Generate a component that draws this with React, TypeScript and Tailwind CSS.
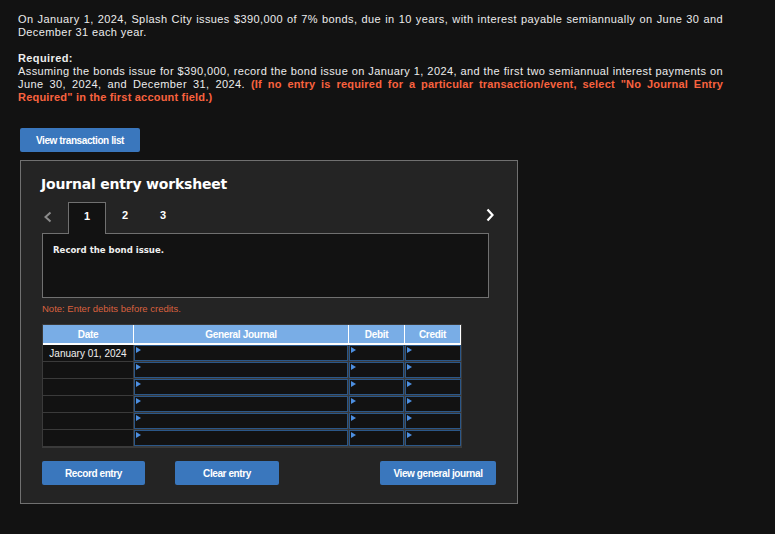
import React from "react";

const rows = [0, 1, 2, 3, 4, 5];

function Tri() {
  return (
    <span className="absolute left-[1px] top-[1px] h-0 w-0 border-y-[3px] border-l-[5px] border-y-transparent border-l-[#4d8fe0]" />
  );
}

function InputCell({ last }: { last?: boolean }) {
  return (
    <div className={`h-[17px] border-b border-[#3a3a3a] ${last ? "" : "border-r"} bg-[#3a3a3a]`}>
      <div className="relative h-full border border-[#2b5788] bg-[#121212]">
        <Tri />
      </div>
    </div>
  );
}

export default function App() {
  const btn =
    "flex h-[24px] items-center justify-center rounded-[2px] bg-[#3a77bd] text-[10px] font-bold tracking-[-0.4px] text-white";
  return (
    <div
      className="min-h-screen w-full bg-[#121212] text-[#ececec]"
      style={{ fontFamily: '"Liberation Sans", Arial, sans-serif' }}
    >
      <div className="pl-[18px] pt-[13px]">
        <p className="w-[705px] text-justify text-[11px] leading-[13px] tracking-[0.4px]">
          On January 1, 2024, Splash City issues $390,000 of 7% bonds, due in 10 years, with interest payable semiannually on June 30 and December 31 each year.
        </p>
        <p className="mt-[13px] w-[705px] text-justify text-[11px] leading-[13px] tracking-[0.4px]">
          <span className="font-bold">Required:</span>
          <br />
          Assuming the bonds issue for $390,000, record the bond issue on January 1, 2024, and the first two semiannual interest payments on June 30, 2024, and December 31, 2024.{" "}
          <span className="font-bold tracking-[0.2px] text-[#f9623f]">
            (If no entry is required for a particular transaction/event, select "No Journal Entry Required" in the first account field.)
          </span>
        </p>

        <button className={`${btn} ml-[2px] mt-[24px] w-[120px]`}>View transaction list</button>

        <div className="ml-[2px] mt-[8px] h-[344px] w-[498px] border border-[#707070] bg-[#242424] pl-[21px] pt-[15px]">
          <div
            className="ml-[-1px] h-[17px] text-[14px] font-bold leading-[17px] tracking-[-0.2px] text-white"
            style={{ fontFamily: '"DejaVu Sans", Verdana, sans-serif' }}
          >
            Journal entry worksheet
          </div>

          <div className="mt-[9px] flex h-[31px] w-[455px] items-start">
            <div className="flex h-[31px] w-[26px] items-center pb-[2px] pl-[1px]">
              <svg width="10" height="12" viewBox="0 0 10 12">
                <path d="M7.5 1.5 L2.5 6 L7.5 10.5" stroke="#8a8a8a" strokeWidth="2" fill="none" />
              </svg>
            </div>
            <div className="relative z-10 flex h-[32px] w-[38px] items-center justify-center border-x border-t border-[#707070] bg-[#121212] pb-[5px] text-[11px] font-bold text-white">
              1
            </div>
            <div className="flex h-[31px] w-[38px] items-center justify-center pb-[4px] text-[11px] font-bold text-white">
              2
            </div>
            <div className="flex h-[31px] w-[38px] items-center justify-center pb-[4px] text-[11px] font-bold text-white">
              3
            </div>
            <div className="flex-1" />
            <div className="flex h-[31px] items-center pb-[5px] pr-[2px]">
              <svg width="10" height="14" viewBox="0 0 10 14">
                <path d="M2.5 1.5 L7.5 7 L2.5 12.5" stroke="#ffffff" strokeWidth="2.2" fill="none" />
              </svg>
            </div>
          </div>

          <div className="h-[65px] w-[447px] border border-[#707070] bg-[#121212] pl-[10px] pt-[10px]">
            <div
              className="text-[9.5px] font-bold leading-[12px] text-[#f0f0f0]"
              style={{ fontFamily: '"DejaVu Sans Condensed", "DejaVu Sans", sans-serif' }}
            >
              Record the bond issue.
            </div>
          </div>

          <div className="mt-[5px] text-[9.5px] leading-[12px] text-[#d9613f]">Note: Enter debits before credits.</div>

          <div className="mt-[9px] w-[420px] border border-[#3a3a3a] bg-[#121212]">
            <div className="grid grid-cols-[91px_215px_56px_56px] border-b-2 border-white">
              {["Date", "General Journal", "Debit", "Credit"].map((h) => (
                <div
                  key={h}
                  className="flex h-[18px] items-center justify-center border-r border-white bg-[#79ade6] text-[10px] font-bold tracking-[-0.3px] text-white"
                >
                  {h}
                </div>
              ))}
            </div>
            {rows.map((r) => (
              <div key={r} className="grid grid-cols-[91px_215px_56px_56px]">
                <div className="flex h-[17px] items-center justify-center border-b border-r border-[#3a3a3a] text-[10px] text-[#f0f0f0]">
                  {r === 0 ? "January 01, 2024" : ""}
                </div>
                <InputCell />
                <InputCell />
                <InputCell last />
              </div>
            ))}
          </div>

          <div className="mt-[13px] flex items-center">
            <button className={`${btn} w-[103px]`}>Record entry</button>
            <button className={`${btn} ml-[30px] w-[104px]`}>Clear entry</button>
            <button className={`${btn} ml-[101px] w-[116px]`}>View general journal</button>
          </div>
        </div>
      </div>
    </div>
  );
}
